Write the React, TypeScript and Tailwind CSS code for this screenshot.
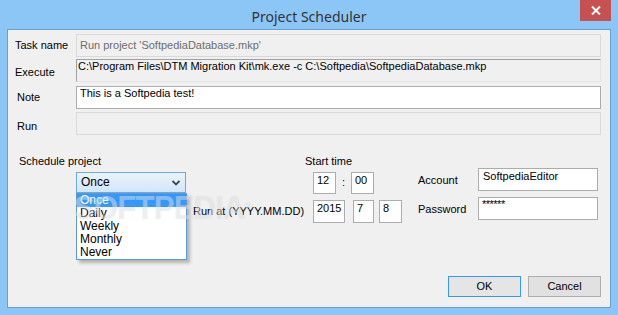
import React from 'react';

const ui = { fontFamily: '"Liberation Sans", Arial, sans-serif' };

function Box({ w, children, className = '' }: { w: string; children?: React.ReactNode; className?: string }) {
    return (
        <div className={`${w} h-[22px] bg-white border border-[#acacac] pl-[3px] pt-[1px] leading-[13px] ${className}`}>
            {children}
        </div>
    );
}

export default function App() {
    const options = ['Once', 'Daily', 'Weekly', 'Monthly', 'Never'];

    return (
        <div className="w-[618px] h-[315px] bg-[#8cc6f7] flex flex-col text-[11px] text-black" style={ui}>
            {/* Title bar */}
            <div className="relative h-[29px] shrink-0">
                <div
                    className="pt-[7px] text-center text-[14px] leading-[19px] text-[#333333]"
                    style={{ fontFamily: '"Noto Sans", "Liberation Sans", sans-serif' }}
                >
                    Project Scheduler
                </div>
                <div className="absolute top-0 right-[7px] w-[31px] h-[21px] bg-[#c75050] flex items-center justify-center">
                    <svg width="10" height="9" viewBox="0 0 10 9">
                        <path d="M1 0.5 L9 8.5 M9 0.5 L1 8.5" stroke="#ffffff" strokeWidth="2" />
                    </svg>
                </div>
            </div>

            {/* Client area */}
            <div className="relative mx-[7px] h-[279px] shrink-0 border border-[#6b9fd2] bg-[#f0f0f0] flex flex-col">
                {/* Text rows */}
                <div className="pt-[4px] flex flex-col">
                    <div className="flex h-[23px]">
                        <div className="w-[68px] pl-[7px] mt-[5px] leading-[13px]">Task name</div>
                        <div className="w-[525px] border border-[#d9d9d9] flex items-center pl-[3px] leading-[13px] text-[#6d6d6d]">
                            Run project 'SoftpediaDatabase.mkp'
                        </div>
                    </div>
                    <div className="flex h-[23px] mt-[2px]">
                        <div className="w-[68px] pl-[7px] mt-[7px] leading-[13px]">Execute</div>
                        <div className="w-[525px] border border-t-[#a0a0a0] border-l-[#a0a0a0] border-r-[#e3e3e3] border-b-[#e3e3e3] pl-[1px] leading-[13px] whitespace-nowrap overflow-hidden">
                            C:\Program Files\DTM Migration Kit\mk.exe -c C:\Softpedia\SoftpediaDatabase.mkp
                        </div>
                    </div>
                    <div className="flex h-[23px] mt-[4px]">
                        <div className="w-[68px] pl-[9px] mt-[5px] leading-[13px]">Note</div>
                        <div className="w-[525px] bg-white border border-[#acacac] pl-[3px] leading-[13px]">
                            This is a Softpedia test!
                        </div>
                    </div>
                    <div className="flex h-[23px] mt-[3px]">
                        <div className="w-[68px] pl-[9px] mt-[8px] leading-[13px]">Run</div>
                        <div className="w-[525px] border border-[#d9d9d9]" />
                    </div>
                </div>

                {/* Schedule section */}
                <div className="flex mt-[19px] leading-[14px]">
                    <div className="w-[185px] pl-[11px]">
                        <div>Schedule project</div>
                        <div className="relative ml-[57px] mt-[4px] w-[110px] h-[21px] text-[12px]">
                            <div className="h-full border border-[#6fa8dc] bg-gradient-to-b from-[#eaf3fc] to-[#d1e6f9] flex items-center justify-between pl-[4px] pr-[5px]">
                                <span className="leading-[13px]">Once</span>
                                <svg width="8" height="6" viewBox="0 0 8 6">
                                    <path d="M0.5 1 L4 4.5 L7.5 1" stroke="#444444" strokeWidth="1.8" fill="none" />
                                </svg>
                            </div>
                            <div className="absolute left-0 top-[21px] w-[111px] z-10 bg-white border border-[#5b9bd5] shadow-[3px_3px_3px_rgba(0,0,0,0.25)]">
                                {options.map((o, i) => (
                                    <div
                                        key={o}
                                        className={`h-[13px] leading-[13px] pl-[3px] ${i === 0 ? 'bg-[#3399ff] text-white' : ''}`}
                                    >
                                        {o}
                                    </div>
                                ))}
                            </div>
                        </div>
                    </div>

                    <div className="w-[225px]">
                        <div className="pl-[112px]">Start time</div>
                        <div className="flex items-start pl-[120px] mt-[4px]">
                            <Box w="w-[23px]">12</Box>
                            <div className="w-[15px] text-center leading-[20px]">:</div>
                            <Box w="w-[23px]">00</Box>
                        </div>
                        <div className="flex items-center mt-[6px] h-[23px]">
                            <div className="w-[120px] leading-[13px]">Run at (YYYY.MM.DD)</div>
                            <Box w="w-[32px]" className="h-[23px]">2015</Box>
                            <Box w="w-[21px]" className="h-[23px] ml-[8px]">7</Box>
                            <Box w="w-[23px]" className="h-[23px] ml-[5px]">8</Box>
                        </div>
                    </div>

                    <div className="flex flex-col">
                        <div className="flex items-center mt-[14px] h-[23px]">
                            <div className="w-[60px] leading-[13px] mt-[2px]">Account</div>
                            <div className="w-[120px] h-[23px] bg-white border border-[#acacac] pl-[4px] pt-[1px] leading-[13px]">
                                SoftpediaEditor
                            </div>
                        </div>
                        <div className="flex items-center mt-[6px] h-[23px]">
                            <div className="w-[60px] leading-[13px] mt-[1px]">Password</div>
                            <div className="w-[120px] h-[23px] bg-white border border-[#acacac] pl-[3px] leading-[13px] tracking-[-0.5px]">
                                ******
                            </div>
                        </div>
                    </div>
                </div>

                {/* Watermark */}
                <div
                    className="absolute left-[66px] top-[160px] z-20 pointer-events-none text-[34px] font-bold leading-[34px] tracking-[-1px] text-white/45 scale-x-[0.92] origin-left [text-shadow:0_0_1px_rgba(0,0,0,0.12)]"
                >
                    SOFTPEDIA<span className="text-[10px] align-top">®</span>
                </div>

                {/* Buttons */}
                <div className="mt-auto mb-[10px] flex justify-end gap-[7px] pr-[9px]">
                    <button className="w-[73px] h-[21px] border border-[#3399ff] bg-[#e5e5e5] leading-[13px]">OK</button>
                    <button className="w-[73px] h-[21px] border border-[#adadad] bg-[#e1e1e1] leading-[13px]">Cancel</button>
                </div>
            </div>
        </div>
    );
}
